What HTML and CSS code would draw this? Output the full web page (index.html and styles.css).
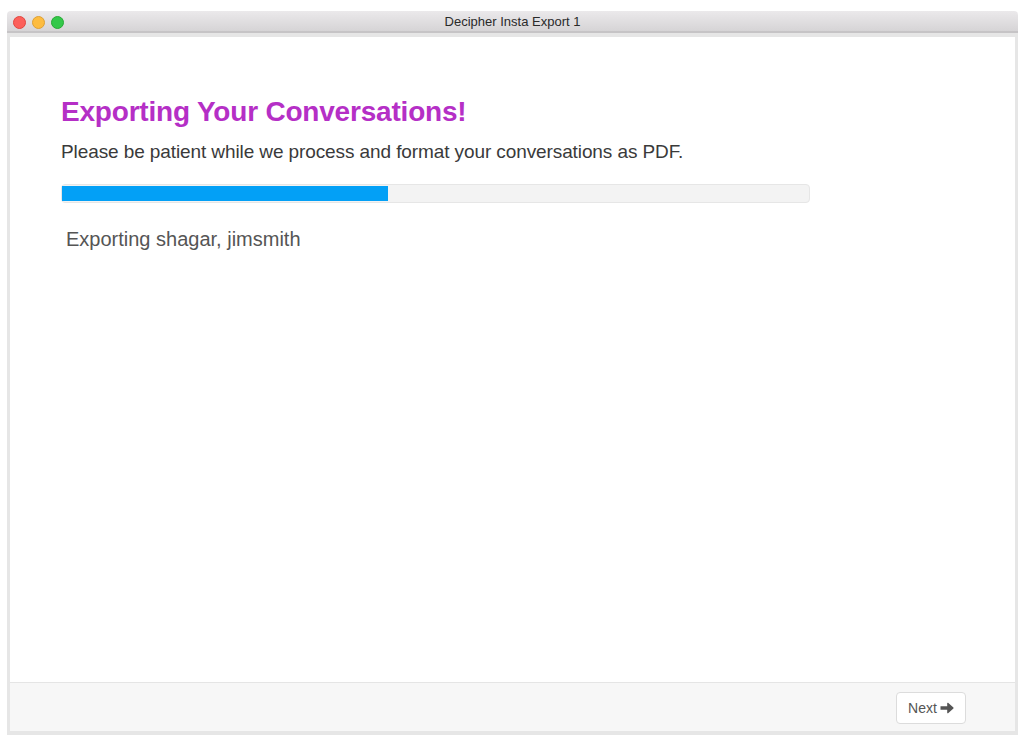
FILE: index.html
```html
<!DOCTYPE html>
<html>
<head>
  <link rel="stylesheet" href="styles.css">
</head>
<body>
  <div class="window">
    <div class="titlebar">
      <div class="lights">
        <span class="light red"></span>
        <span class="light yellow"></span>
        <span class="light green"></span>
      </div>
      <div class="title">Decipher Insta Export 1</div>
    </div>

    <div class="frame">
      <div class="content">
        <h1 class="heading">Exporting Your Conversations!</h1>
        <p class="lead">Please be patient while we process and format your conversations as PDF.</p>

        <div class="progress">
          <div class="progress-bar" style="width: 43.7%"></div>
        </div>

        <div class="status">Exporting shagar, jimsmith</div>
      </div>

      <div class="footer">
        <button class="next-button">
          Next
          <svg width="14" height="12" viewBox="0 0 14 12" xmlns="http://www.w3.org/2000/svg">
            <path d="M0.5 4.3H7.2V1.2C7.2 0.7 7.7 0.5 8.1 0.8L13.4 5.5C13.7 5.8 13.7 6.2 13.4 6.5L8.1 11.2C7.7 11.5 7.2 11.3 7.2 10.8V7.7H0.5Z" fill="currentColor"/>
          </svg>
        </button>
      </div>
    </div>
  </div>
</body>
</html>
```

FILE: styles.css
```css
body {
  margin: 0;
  padding: 11px 0 0 7px;
  background: white;
  font-family: "Liberation Sans", Arial, sans-serif;
  color: #333;
}

.window {
  width: 1011px;
  height: 724px;
  display: flex;
  flex-direction: column;
}

.titlebar {
  position: relative;
  height: 20px;
  border-bottom: 2px solid #c6c4c6;
  border-radius: 4px 4px 0 0;
  background: linear-gradient(#ebe9eb, #d6d4d6);
  display: flex;
  align-items: center;
  justify-content: center;
}

.lights {
  position: absolute;
  left: 6px;
  top: 5px;
  display: flex;
  gap: 6px;
}

.light {
  width: 13px;
  height: 13px;
  border-radius: 50%;
  box-sizing: border-box;
}

.light.red {
  background: #fc605b;
  border: 1px solid #e2463f;
}

.light.yellow {
  background: #fdbc40;
  border: 1px solid #dea033;
}

.light.green {
  background: #34c84a;
  border: 1px solid #27aa35;
}

.title {
  font-size: 13px;
  color: #2a2a2a;
  margin-top: 1px;
}

.frame {
  flex: 1;
  display: flex;
  flex-direction: column;
  border: 3px solid #e6e6e6;
  border-top-width: 4px;
  border-bottom-width: 4px;
  background: white;
}

.content {
  flex: 1;
  padding: 59px 0 0 51px;
}

.heading {
  margin: 0;
  font-size: 28px;
  line-height: 32px;
  font-weight: bold;
  color: #b52fc6;
  letter-spacing: -0.2px;
}

.lead {
  margin: 12px 0 0;
  font-size: 19px;
  line-height: 24px;
  color: #3a3a3a;
  letter-spacing: -0.1px;
}

.progress {
  width: 749px;
  height: 19px;
  margin-top: 20px;
  box-sizing: border-box;
  border: 1px solid #e6e6e6;
  border-radius: 4px;
  background: #f3f3f3;
  padding: 1px 0;
}

.progress-bar {
  height: 100%;
  background: #03a0f6;
}

.status {
  margin: 24px 0 0 5px;
  font-size: 20px;
  line-height: 24px;
  color: #555;
}

.footer {
  height: 48px;
  border-top: 1px solid #e5e5e5;
  background: #f7f7f7;
  display: flex;
  align-items: center;
  justify-content: flex-end;
  padding-right: 49px;
}

.next-button {
  width: 70px;
  height: 32px;
  margin-top: 1px;
  border: 1px solid #dcdcdc;
  border-radius: 4px;
  background: white;
  color: #555;
  font-family: "Liberation Sans", Arial, sans-serif;
  font-size: 14px;
  display: flex;
  align-items: center;
  justify-content: center;
  gap: 3px;
  padding: 0;
  cursor: pointer;
}
```
